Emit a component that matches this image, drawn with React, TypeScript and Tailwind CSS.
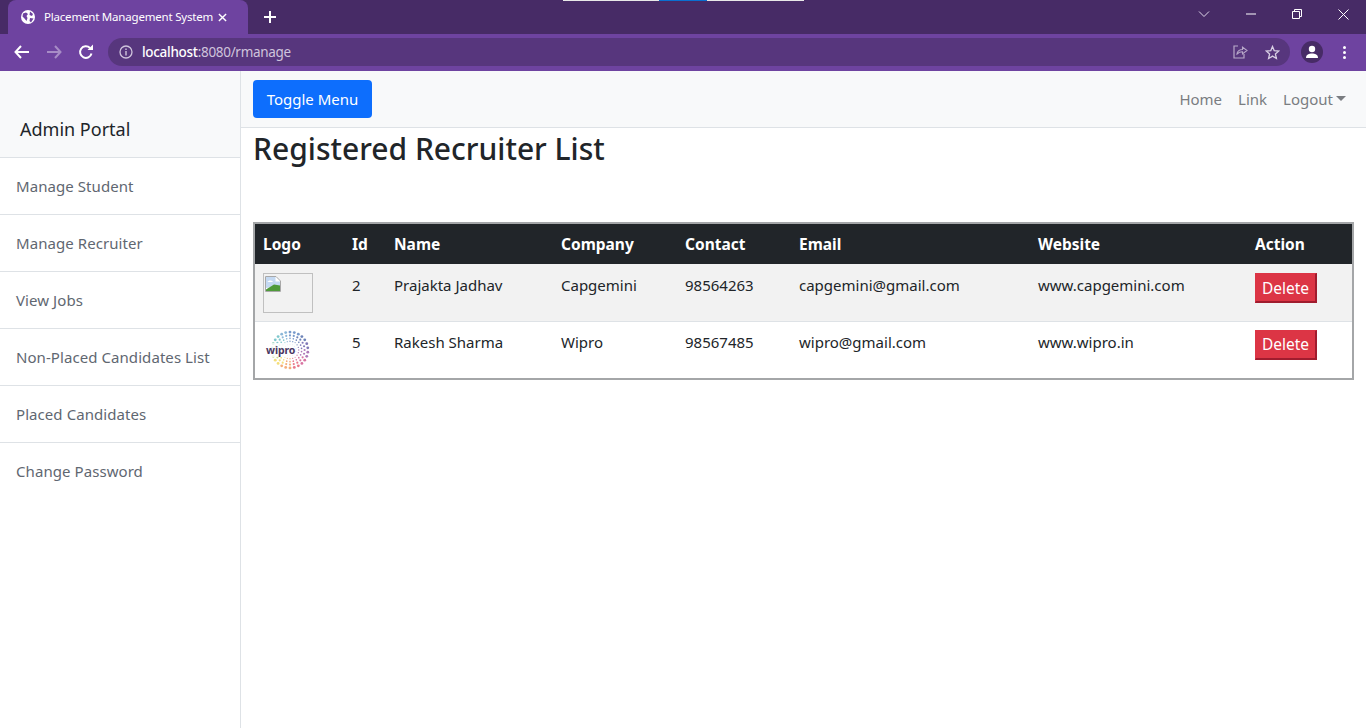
import React from "react";

const FONT = "font-['Noto_Sans','Open_Sans',sans-serif]";
const menu = ["Manage Student", "Manage Recruiter", "View Jobs", "Non-Placed Candidates List", "Placed Candidates", "Change Password"];

function WiproLogo() {
  const colors = ["#3f6fb5", "#2f4f9a", "#4a3f9a", "#8a3f9a", "#c8397a", "#e0405a", "#f08a40", "#f0d040", "#a8d060", "#58b88a", "#48b0b8", "#5a98c8"];
  const dots: React.ReactElement[] = [];
  [[21.5, 26, 1.7], [17.5, 24, 1.3], [14, 22, 1], [10.5, 20, 0.8], [7, 14, 0.6]].forEach(([r, n, s], ri) => {
    for (let i = 0; i < n; i++) {
      const a = (i / n) * Math.PI * 2 - Math.PI / 2;
      const c = colors[Math.floor((i / n) * colors.length)];
      dots.push(<circle key={ri + "-" + i} cx={24 + r * Math.cos(a)} cy={24 + r * Math.sin(a)} r={s} fill={c} opacity={0.7} />);
    }
  });
  return (
    <div className="relative w-[50px] h-[40px] flex items-center justify-center">
      <svg width="44" height="40" viewBox="0 0 48 48" className="ml-[3px]">{dots}</svg>
      <span className="absolute left-[2px] top-[13px] px-[1px] bg-white/80 text-[10.5px] leading-[14px] font-bold tracking-[-0.1px] text-[#4a3660]">wipro</span>
    </div>
  );
}

function BrokenImage() {
  return (
    <div className="w-[50px] h-[40px] border border-[#c0c0c0] pl-[1px] pt-[2px]">
      <svg width="16" height="16" viewBox="0 0 16 16">
        <path d="M0.5 0.5H11L15.5 5V15.5H0.5Z" fill="#fff" stroke="#a8a8a8" />
        <path d="M1 1H10.5V5.5H15V10L1 12Z" fill="#c4d9f2" />
        <path d="M1 15V13.5L9 8.5L15 9.5V15Z" fill="#4f9a3a" />
        <path d="M2.5 6C3.5 4 7 4 8 6Z" fill="#fff" />
      </svg>
    </div>
  );
}

function Row({ logo, id, name, company, contact, email, site, bg, td }: { logo: React.ReactNode; id: string; name: string; company: string; contact: string; email: string; site: string; bg: string; td: string }) {
  return (
    <tr className={bg + " h-[57px] border-b border-[#dee2e6] last:border-b-0"}>
      <td className={td}>{logo}</td>
      <td className={td}>{id}</td>
      <td className={td}>{name}</td>
      <td className={td}>{company}</td>
      <td className={td}>{contact}</td>
      <td className={td}>{email}</td>
      <td className={td}>{site}</td>
      <td className={td}>
        <button className="w-[62px] h-[30px] pt-[2px] bg-[#dc3545] text-white text-[15.5px] leading-none border-r-2 border-b-2 border-[#a01c2e] border-t border-l border-t-[#dc3545] border-l-[#dc3545]">Delete</button>
      </td>
    </tr>
  );
}

export default function App() {
  const heads = ["Logo", "Id", "Name", "Company", "Contact", "Email", "Website", "Action"];
  return (
    <div className={FONT + " w-[1366px] h-[728px] overflow-hidden bg-white flex flex-col"}>
      {/* Tab strip */}
      <div className="relative h-[34px] bg-[#472b66] flex items-end pl-2 shrink-0">
        <div className="absolute left-[563px] top-0 h-px w-[241px] bg-[#e8e8e8]">
          <div className="ml-[96px] w-[48px] h-px bg-[#0a6fd0]" />
        </div>
        <div className="w-[240px] h-[34px] bg-[#6e43a0] rounded-t-lg flex items-center pl-[13px] text-white">
          <svg width="14" height="14" viewBox="0 0 14 14" className="shrink-0">
            <circle cx="7" cy="7" r="7" fill="#fff" />
            <path d="M2 3.5L5 2.5L7 4L5.5 6L6.5 8L5.5 11L3.5 8.5L1.5 6.5Z M9 1.5L12 4L11 6L8.5 5Z M9 8L12.5 8.5L10 12.5L8.5 11Z" fill="#6e43a0" />
          </svg>
          <span className="ml-[9px] text-[11.5px] tracking-[-0.2px] whitespace-nowrap w-[173px] shrink-0">Placement Management System</span>
          <svg width="9" height="9" viewBox="0 0 10 10" className="ml-[1px] shrink-0"><path d="M1 1L9 9M9 1L1 9" stroke="#fff" strokeWidth="1.6" /></svg>
        </div>
        <svg width="12" height="12" viewBox="0 0 12 12" className="ml-[16px] mb-[11px]"><path d="M6 0V12M0 6H12" stroke="#fff" strokeWidth="2" /></svg>
        <div className="ml-auto h-[34px] flex items-center text-white">
          <svg width="12" height="8" viewBox="0 0 12 8" className="mr-[36px] mb-[6px]"><path d="M1 1.5L6 6.5L11 1.5" stroke="#e0d8ea" strokeWidth="1" fill="none" /></svg>
          <svg width="10" height="2" viewBox="0 0 10 2" className="mr-[36px] mb-[6px]"><path d="M0 1H10" stroke="#fff" strokeWidth="1" /></svg>
          <svg width="10" height="10" viewBox="0 0 10 10" className="mr-[36px] mb-[6px]"><path d="M0.5 2.5H7.5V9.5H0.5Z M2.5 2.5V0.5H9.5V7.5H7.5" stroke="#fff" strokeWidth="1" fill="none" /></svg>
          <svg width="11" height="11" viewBox="0 0 11 11" className="mr-[17px] mb-[6px]"><path d="M0.5 0.5L10.5 10.5M10.5 0.5L0.5 10.5" stroke="#fff" strokeWidth="1" /></svg>
        </div>
      </div>
      {/* Address bar */}
      <div className="h-[37px] bg-[#6e43a0] flex items-start pt-[4px] shrink-0">
        <svg width="16" height="14" viewBox="0 0 16 14" className="ml-[14px] mt-[7px]"><path d="M15 7H2M7 1L1.5 7L7 13" stroke="#fff" strokeWidth="2" fill="none" /></svg>
        <svg width="16" height="14" viewBox="0 0 16 14" className="ml-[16px] mt-[7px]"><path d="M1 7H14M9 1L14.5 7L9 13" stroke="#a78cc6" strokeWidth="2" fill="none" /></svg>
        <svg width="16" height="16" viewBox="0 0 16 16" className="ml-[16px] mt-[6px]"><path d="M13.5 9.5A5.8 5.8 0 1 1 12 4" stroke="#fff" strokeWidth="2" fill="none" /><path d="M9.5 6H15V0.5Z" fill="#fff" /></svg>
        <div className="ml-[14px] w-[1182px] h-[28px] rounded-[14px] bg-[#57367d] flex items-center pl-[11px]">
          <svg width="14" height="14" viewBox="0 0 14 14"><circle cx="7" cy="7" r="6" stroke="#cfc4dc" strokeWidth="1.3" fill="none" /><path d="M7 6V10.5M7 3.5V5" stroke="#cfc4dc" strokeWidth="1.4" /></svg>
          <span className="ml-[9px] text-[13.5px] tracking-[-0.3px] text-white font-medium">localhost<span className="text-[#cfc4dc] font-normal">:8080/rmanage</span></span>
          <svg width="15" height="14" viewBox="0 0 15 14" className="ml-auto"><path d="M5 1H1V13H11V9" stroke="#b8a9c9" strokeWidth="1.2" fill="none" /><path d="M4 9C4 6 7 4.5 9.5 4.5V2L14 5.5L9.5 9V6.8C7.5 6.8 5.5 7.5 4 9Z" stroke="#b8a9c9" strokeWidth="1.1" fill="none" /></svg>
          <svg width="15" height="15" viewBox="0 0 15 15" className="ml-[17px] mr-[10px]"><path d="M7.5 1.5L9.2 5.6L13.8 6L10.4 9L11.4 13.5L7.5 11.1L3.6 13.5L4.6 9L1.2 6L5.8 5.6Z" stroke="#d8cfe4" strokeWidth="1.3" fill="none" /></svg>
        </div>
        <div className="ml-[11px] w-[22px] h-[22px] mt-[3px] rounded-full bg-[#472b66] flex items-center justify-center">
          <svg width="14" height="14" viewBox="0 0 14 14"><circle cx="7" cy="4" r="3.2" fill="#fff" /><path d="M1 13C1 9.5 4 8.5 7 8.5S13 9.5 13 13Z" fill="#fff" /></svg>
        </div>
        <div className="ml-[20px] mt-[8px] flex flex-col gap-[2px]">
          <div className="w-[3px] h-[3px] rounded-full bg-white" />
          <div className="w-[3px] h-[3px] rounded-full bg-white" />
          <div className="w-[3px] h-[3px] rounded-full bg-white" />
        </div>
      </div>

      {/* Page */}
      <div className="flex-1 flex min-h-0">
        <aside className="w-[241px] shrink-0 border-r border-[#dee2e6] bg-white">
          <div className="h-[87px] bg-[#f8f9fa] border-b border-[#dee2e6] pl-5 pt-[46px] text-[18px] leading-[24px] text-[#212529]">Admin Portal</div>
          {menu.map((m) => (
            <div key={m} className="h-[57px] border-b border-[#dee2e6] last:border-b-0 pl-4 flex items-center text-[15px] tracking-[0.07px] text-[#5f6771]">{m}</div>
          ))}
        </aside>
        <main className="flex-1 min-w-0">
          <nav className="h-[57px] bg-[#f8f9fa] border-b border-[#dee2e6] flex items-center pl-3 pr-[20px]">
            <button className="h-[38px] w-[119px] bg-[#0d6efd] text-white rounded text-[15px]">Toggle Menu</button>
            <div className="ml-auto flex gap-4 text-[15px] text-[#7a7d81]">
              <span>Home</span>
              <span>Link</span>
              <span className="flex items-center">Logout<span className="ml-[3px] mb-[1px] border-x-[5px] border-x-transparent border-t-[5px] border-t-[#7a7d81]" /></span>
            </div>
          </nav>
          <h1 className="pl-3 h-[94px] text-[30px] leading-[41px] font-medium text-[#212529]">Registered Recruiter List</h1>
          <div className="ml-3 mr-3 border-2 border-[#a4a6a8]">
            <table className="w-full table-fixed border-collapse">
              <colgroup>
                <col className="w-[89px]" /><col className="w-[42px]" /><col className="w-[167px]" /><col className="w-[124px]" /><col className="w-[114px]" /><col className="w-[239px]" /><col className="w-[217px]" /><col />
              </colgroup>
              <thead>
                <tr className="bg-[#212529] h-[40px]">
                  {heads.map((h) => (
                    <th key={h} className="px-2 pt-[2px] text-left text-[15.5px] font-bold text-white">{h}</th>
                  ))}
                </tr>
              </thead>
              <tbody>
                <Row td="px-2 pt-[9px] pb-[7px] align-top text-[15px] leading-6 text-[#212529]" logo={<BrokenImage />} id="2" name="Prajakta Jadhav" company="Capgemini" contact="98564263" email="capgemini@gmail.com" site="www.capgemini.com" bg="bg-[#f2f2f2]" />
                <Row td="px-2 pt-2 pb-2 align-top text-[15px] leading-6 text-[#212529]" logo={<WiproLogo />} id="5" name="Rakesh Sharma" company="Wipro" contact="98567485" email="wipro@gmail.com" site="www.wipro.in" bg="bg-white" />
              </tbody>
            </table>
          </div>
        </main>
      </div>
    </div>
  );
}
